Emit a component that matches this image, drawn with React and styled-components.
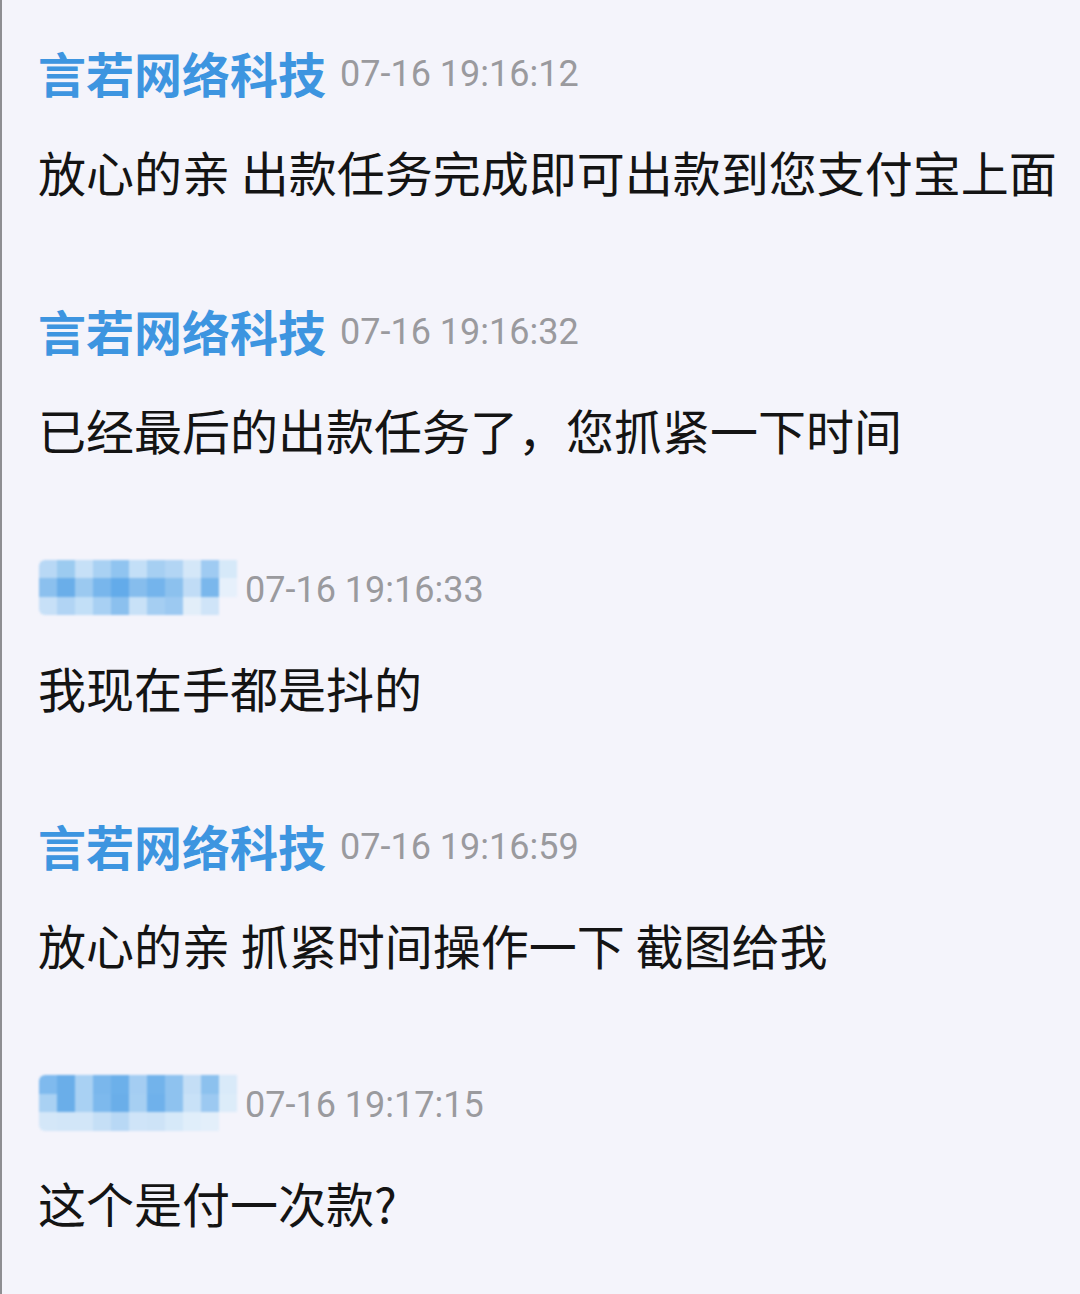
import styled, { createGlobalStyle } from 'styled-components';

const GlobalStyle = createGlobalStyle`
	html, body {
		margin: 0;
		padding: 0;
		background: #f4f4fb;
	}
`;

const Page = styled.div`
	width: 1080px;
	min-height: 1294px;
	box-sizing: border-box;
	border-left: 2px solid #8e8e92;
	background: #f4f4fb;
	padding: 40px 0 0 36px;
	display: flex;
	flex-direction: column;
	overflow: hidden;
`;

const Block = styled.div`
	display: flex;
	flex-direction: column;
	margin-bottom: 94.75px;
`;

const Header = styled.div`
	display: flex;
	align-items: center;
	height: 64px;
	gap: ${(p) => (p.$masked ? '8px' : '14px')};
	margin-bottom: 35px;
`;

const Name = styled.span`
	font-family: 'Noto Sans CJK SC', sans-serif;
	font-weight: 700;
	font-size: 48px;
	line-height: 64px;
	color: #3d95e0;
	white-space: nowrap;
`;

const Time = styled.span`
	font-family: Roboto, 'Liberation Sans', sans-serif;
	font-size: 36px;
	line-height: 64px;
	color: #9a9a9e;
	padding-top: 4px;
`;

const Text = styled.div`
	font-family: 'Noto Sans CJK SC', sans-serif;
	font-size: 48px;
	line-height: 64px;
	color: #141414;
	white-space: nowrap;
`;

const Mosaic = styled.div`
	display: grid;
	grid-template-columns: repeat(11, 18px);
	grid-template-rows: repeat(3, 18.5px);
	border-radius: 6px 0 0 6px;
	overflow: hidden;
	filter: blur(0.9px);
	margin-left: 1px;
`;

const Cell = styled.span.attrs((p) => ({ style: { background: p.$c } }))`
	display: block;
`;

const mosaicA = [
	'#b8d8f5', '#9ccbf0', '#c6e0f7', '#a9d1f3', '#90c4f0', '#c3dff7', '#a6cff2', '#b2d5f4', '#d4e7f8', '#9fcbf2', '#d6e9f9',
	'#8bc0ee', '#6aaee9', '#9bc9f0', '#78b6ec', '#63abea', '#86bded', '#74b4ec', '#8cc1ee', '#c0dcf6', '#7ab7ec', '#e6f0fb',
	'#c7e0f7', '#b1d4f4', '#c2dff7', '#a8d0f3', '#8bc0ee', '#c8e1f7', '#a5cef2', '#9cc9f1', '#e2eef9', '#cfe4f8', 'transparent',
];

const mosaicB = [
	'#7fbaee', '#6aaee9', '#a9d1f3', '#7ab7ec', '#6cb0ea', '#a4cdf2', '#72b3eb', '#8ec2ef', '#c4def6', '#8cc1ee', '#d9eaf9',
	'#a9d1f3', '#6aaee9', '#a9d1f3', '#7db9ed', '#6aaee9', '#a6cff2', '#6fb1eb', '#8ec2ef', '#c8e1f7', '#9cc9f1', '#dcecf9',
	'#d4e7f8', '#d2e6f8', '#d2e6f8', '#c5dff6', '#b8d8f5', '#cfe4f8', '#cde3f7', '#d6e9f9', '#e0eefa', '#e3effa', 'transparent',
];

const messages = [
	{ name: '言若网络科技', time: '07-16 19:16:12', text: '放心的亲 出款任务完成即可出款到您支付宝上面' },
	{ name: '言若网络科技', time: '07-16 19:16:32', text: '已经最后的出款任务了，您抓紧一下时间' },
	{ mosaic: mosaicA, time: '07-16 19:16:33', text: '我现在手都是抖的' },
	{ name: '言若网络科技', time: '07-16 19:16:59', text: '放心的亲 抓紧时间操作一下 截图给我' },
	{ mosaic: mosaicB, time: '07-16 19:17:15', text: '这个是付一次款?' },
];

const App = () => {
	return (
		<>
			<GlobalStyle />
			<Page>
				{messages.map((m, i) => (
					<Block key={i}>
						<Header $masked={!!m.mosaic}>
							{m.mosaic ? (
								<Mosaic>
									{m.mosaic.map((c, j) => (
										<Cell key={j} $c={c} />
									))}
								</Mosaic>
							) : (
								<Name>{m.name}</Name>
							)}
							<Time>{m.time}</Time>
						</Header>
						<Text>{m.text}</Text>
					</Block>
				))}
			</Page>
		</>
	);
};

export default App;
